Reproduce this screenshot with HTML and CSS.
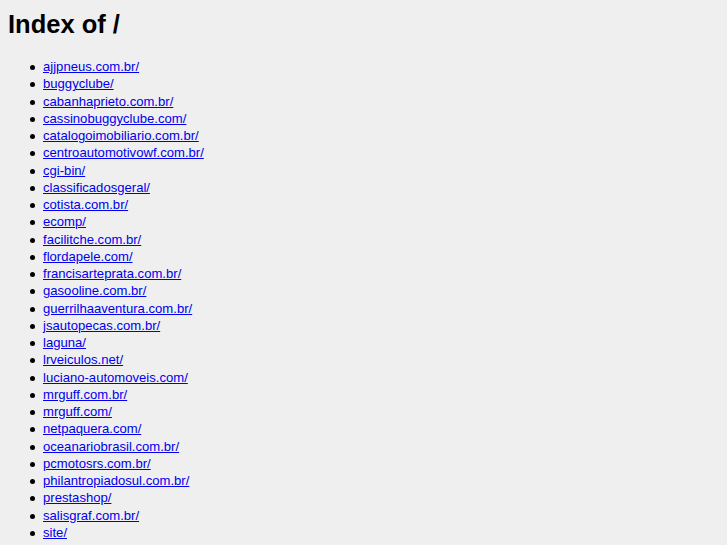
FILE: index.html
```html
<!DOCTYPE html>
<html lang="en">
<head>
	<meta charset="UTF-8">
	<title>Index of /</title>
	<link rel="stylesheet" href="styles.css">
</head>
<body>
	<h1>Index of /</h1>
	<ul>
		<li><a href="ajjpneus.com.br/">ajjpneus.com.br/</a></li>
		<li><a href="buggyclube/">buggyclube/</a></li>
		<li><a href="cabanhaprieto.com.br/">cabanhaprieto.com.br/</a></li>
		<li><a href="cassinobuggyclube.com/">cassinobuggyclube.com/</a></li>
		<li><a href="catalogoimobiliario.com.br/">catalogoimobiliario.com.br/</a></li>
		<li><a href="centroautomotivowf.com.br/">centroautomotivowf.com.br/</a></li>
		<li><a href="cgi-bin/">cgi-bin/</a></li>
		<li><a href="classificadosgeral/">classificadosgeral/</a></li>
		<li><a href="cotista.com.br/">cotista.com.br/</a></li>
		<li><a href="ecomp/">ecomp/</a></li>
		<li><a href="facilitche.com.br/">facilitche.com.br/</a></li>
		<li><a href="flordapele.com/">flordapele.com/</a></li>
		<li><a href="francisarteprata.com.br/">francisarteprata.com.br/</a></li>
		<li><a href="gasooline.com.br/">gasooline.com.br/</a></li>
		<li><a href="guerrilhaaventura.com.br/">guerrilhaaventura.com.br/</a></li>
		<li><a href="jsautopecas.com.br/">jsautopecas.com.br/</a></li>
		<li><a href="laguna/">laguna/</a></li>
		<li><a href="lrveiculos.net/">lrveiculos.net/</a></li>
		<li><a href="luciano-automoveis.com/">luciano-automoveis.com/</a></li>
		<li><a href="mrguff.com.br/">mrguff.com.br/</a></li>
		<li><a href="mrguff.com/">mrguff.com/</a></li>
		<li><a href="netpaquera.com/">netpaquera.com/</a></li>
		<li><a href="oceanariobrasil.com.br/">oceanariobrasil.com.br/</a></li>
		<li><a href="pcmotosrs.com.br/">pcmotosrs.com.br/</a></li>
		<li><a href="philantropiadosul.com.br/">philantropiadosul.com.br/</a></li>
		<li><a href="prestashop/">prestashop/</a></li>
		<li><a href="salisgraf.com.br/">salisgraf.com.br/</a></li>
		<li><a href="site/">site/</a></li>
	</ul>
</body>
</html>
```

FILE: styles.css
```css
body {
	margin: 0 8px;
	background: #efefef;
	color: #000;
	font-family: "Liberation Sans", Arial, sans-serif;
}
h1 {
	margin: 9px 0 0;
	font-size: 25.5px;
	line-height: 30px;
	font-weight: bold;
}
ul {
	margin: 19px 0 0;
	padding-left: 35px;
	list-style: none;
	font-size: 13.1px;
	line-height: 17.25px;
}
li::before {
	content: "";
	display: inline-block;
	width: 5px;
	height: 5px;
	border-radius: 50%;
	background: #000;
	margin-left: -13px;
	margin-right: 8px;
	vertical-align: middle;
}
a {
	color: #0000ee;
}
```
